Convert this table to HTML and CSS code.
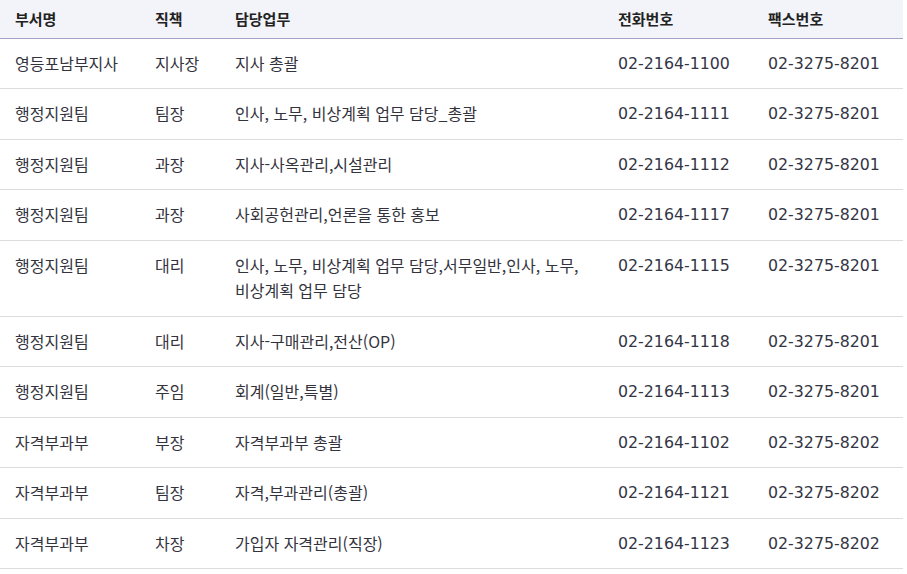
FILE: index.html
```html
<!DOCTYPE html>
<html lang="ko">
<head>
<meta charset="utf-8">
<title>부서 연락처</title>
<link rel="stylesheet" href="styles.css">
</head>
<body>
<table class="staff">
  <colgroup>
    <col class="c-dept"><col class="c-pos"><col class="c-task"><col class="c-tel"><col class="c-fax">
  </colgroup>
  <thead>
    <tr><th>부서명</th><th>직책</th><th>담당업무</th><th>전화번호</th><th>팩스번호</th></tr>
  </thead>
  <tbody>
    <tr><td>영등포남부지사</td><td>지사장</td><td>지사 총괄</td><td class="num">02-2164-1100</td><td class="num">02-3275-8201</td></tr>
    <tr><td>행정지원팀</td><td>팀장</td><td>인사, 노무, 비상계획 업무 담당_총괄</td><td class="num">02-2164-1111</td><td class="num">02-3275-8201</td></tr>
    <tr><td>행정지원팀</td><td>과장</td><td>지사-사옥관리,시설관리</td><td class="num">02-2164-1112</td><td class="num">02-3275-8201</td></tr>
    <tr><td>행정지원팀</td><td>과장</td><td>사회공헌관리,언론을 통한 홍보</td><td class="num">02-2164-1117</td><td class="num">02-3275-8201</td></tr>
    <tr><td>행정지원팀</td><td>대리</td><td>인사, 노무, 비상계획 업무 담당,서무일반,인사, 노무, 비상계획 업무 담당</td><td class="num">02-2164-1115</td><td class="num">02-3275-8201</td></tr>
    <tr><td>행정지원팀</td><td>대리</td><td>지사-구매관리,전산(OP)</td><td class="num">02-2164-1118</td><td class="num">02-3275-8201</td></tr>
    <tr><td>행정지원팀</td><td>주임</td><td>회계(일반,특별)</td><td class="num">02-2164-1113</td><td class="num">02-3275-8201</td></tr>
    <tr><td>자격부과부</td><td>부장</td><td>자격부과부 총괄</td><td class="num">02-2164-1102</td><td class="num">02-3275-8202</td></tr>
    <tr><td>자격부과부</td><td>팀장</td><td>자격,부과관리(총괄)</td><td class="num">02-2164-1121</td><td class="num">02-3275-8202</td></tr>
    <tr><td>자격부과부</td><td>차장</td><td>가입자 자격관리(직장)</td><td class="num">02-2164-1123</td><td class="num">02-3275-8202</td></tr>
  </tbody>
</table>
</body>
</html>
```
FILE: styles.css
```css
html, body {
  margin: 0;
  padding: 0;
  background: #ffffff;
}
body {
  font-family: "Noto Sans CJK KR", "Noto Sans", sans-serif;
  font-size: 16px;
  color: #33333d;
}
.staff {
  width: 903px;
  border-collapse: collapse;
  table-layout: fixed;
}
.c-dept { width: 140px; }
.c-pos { width: 80px; }
.c-task { width: 383px; }
.c-tel { width: 150px; }
.c-fax { width: 150px; }
.staff th {
  background: #f3f4f9;
  text-align: left;
  font-weight: 700;
  font-size: 15px;
  color: #222;
  padding: 6px 15px;
  line-height: 25.5px;
  border-bottom: 1px solid #a2a4c8;
}
.staff td {
  padding: 12px 8px 12px 15px;
  line-height: 25.5px;
  vertical-align: top;
  word-break: keep-all;
  border-bottom: 1px solid #dcdcdc;
}
.staff td.num {
  font-family: "DejaVu Sans", "Noto Sans", sans-serif;
  font-size: 15.8px;
  color: #333544;
}
```
